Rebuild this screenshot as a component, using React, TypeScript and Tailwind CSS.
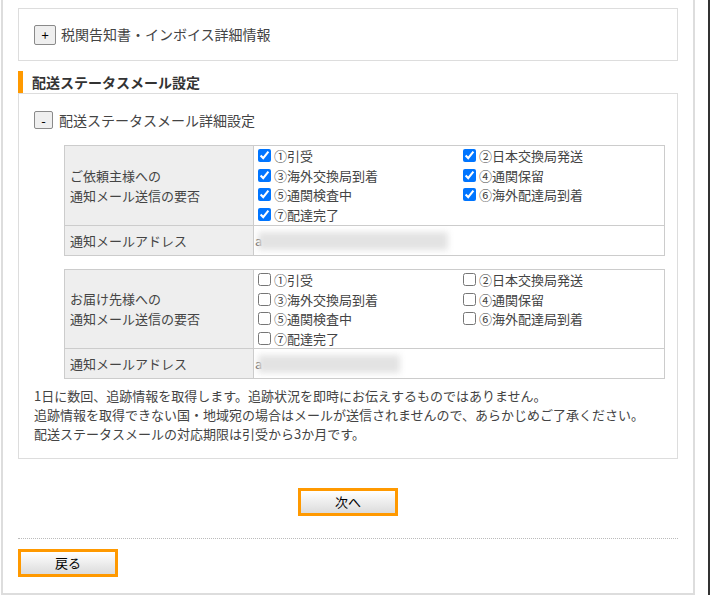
import React from "react";

const items = [
  "①引受",
  "②日本交換局発送",
  "③海外交換局到着",
  "④通関保留",
  "⑤通関検査中",
  "⑥海外配達局到着",
  "⑦配達完了",
];

function Table({ label1, label2, checked, blurW, rowH }: { label1: string; label2: string; checked: boolean; blurW: number; rowH: number }) {
  return (
    <div className="ml-[30px] w-[601px] border border-[#ccc] grid grid-cols-[189px_1fr] text-[13px] text-[#444]">
      <div
        className="bg-[#eee] border-r border-b border-[#ccc] pl-[5px] flex flex-col justify-center leading-[20px]"
        style={{ height: rowH }}
      >
        <div>{label1}</div>
        <div>{label2}</div>
      </div>
      <div className="border-b border-[#ccc] grid grid-cols-2 content-start" style={{ height: rowH }}>
        {items.map((t) => (
          <label key={t} className="flex items-center h-[19.5px] leading-[19.5px] whitespace-nowrap">
            <input
              type="checkbox"
              defaultChecked={checked}
              className="ml-[4px] mr-[3px] w-[13px] h-[13px]"
            />
            <span>{t}</span>
          </label>
        ))}
      </div>
      <div className="bg-[#eee] border-r border-[#ccc] h-[29px] pl-[5px] flex items-center">
        通知メールアドレス
      </div>
      <div className="h-[29px] flex items-center overflow-hidden">
        <span className="ml-[1px] text-[13px] text-[#444]">a</span>
        <div
          className="-ml-[4px] h-[18px] bg-[#e3e3e3] blur-[3px]"
          style={{ width: blurW }}
        />
      </div>
    </div>
  );
}

export default function App() {
  return (
    <div className="flex w-[710px] h-[595px] bg-white overflow-hidden font-['Noto_Sans_CJK_JP',sans-serif] text-[#333]">
      <div className="ml-[1px] w-[694px] h-[595px] border-x-2 border-b-2 border-[#ddd] px-[15px] pt-[8px] flex flex-col">
        {/* customs box */}
        <div className="border border-[#ddd] h-[53px] flex items-center pl-[15px]">
          <div className="w-[22px] h-[20px] border border-[#8a8a8a] rounded-[2px] bg-[#efefef] flex items-center justify-center text-[13px] text-black leading-none">
            +
          </div>
          <span className="ml-[5px] text-[14px] text-[#444]">税関告知書・インボイス詳細情報</span>
        </div>

        {/* header */}
        <div className="mt-[10px] h-[22px] border-l-[5px] border-[#f90] pl-[9px] flex items-center font-bold text-[14px] text-[#333]">
          配送ステータスメール設定
        </div>

        {/* status box */}
        <div className="border border-[#ddd] pt-[17px] px-[15px] pb-[15px]">
          <div className="flex items-center h-[18px]">
            <div className="w-[19px] h-[18px] border border-[#8a8a8a] rounded-[2px] bg-[#efefef] flex items-center justify-center text-[13px] text-black leading-none">
              -
            </div>
            <span className="ml-[6px] text-[14px] text-[#444]">配送ステータスメール詳細設定</span>
          </div>

          <div className="mt-[16px]">
            <Table label1="ご依頼主様への" label2="通知メール送信の要否" checked={true} blurW={190} rowH={80} />
          </div>
          <div className="mt-[13px]">
            <Table label1="お届け先様への" label2="通知メール送信の要否" checked={false} blurW={142} rowH={79} />
          </div>

          <div className="mt-[7px] text-[13px] leading-[19px] text-[#444]">
            <p>1日に数回、追跡情報を取得します。追跡状況を即時にお伝えするものではありません。</p>
            <p>追跡情報を取得できない国・地域宛の場合はメールが送信されませんので、あらかじめご了承ください。</p>
            <p>配送ステータスメールの対応期限は引受から3か月です。</p>
          </div>
        </div>

        <div className="mt-[29px] flex justify-center">
          <button className="w-[100px] h-[28px] border-[3px] border-[#f90] bg-linear-to-b from-white to-[#dcdcdc] text-[13px] text-black flex items-center justify-center">
            次へ
          </button>
        </div>

        <div className="mt-[22px] border-t border-dotted border-[#bbb]" />

        <div className="mt-[10px]">
          <button className="w-[100px] h-[28px] border-[3px] border-[#f90] bg-linear-to-b from-white to-[#dcdcdc] text-[13px] text-black flex items-center justify-center">
            戻る
          </button>
        </div>
      </div>
      <div className="w-[13px]" />
      <div className="w-[2px] bg-[#333]" />
    </div>
  );
}
